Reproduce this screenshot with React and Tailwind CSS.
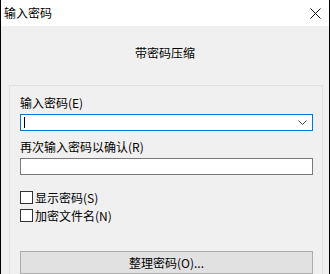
import { useState } from 'react';

const font = { fontFamily: '"Noto Sans CJK SC", "Liberation Sans", sans-serif' };

function Check({ label }) {
    return (
        <label className="flex h-[13px] items-center gap-[2px] text-[12px] leading-none text-black">
            <span className="h-[13px] w-[13px] border border-[#333] bg-white" />
            {label}
        </label>
    );
}

export default function App() {
    const [pwd, setPwd] = useState('');
    const [confirm, setConfirm] = useState('');

    return (
        <div
            className="flex h-[274px] w-[330px] flex-col overflow-hidden border-x border-black bg-[#f0f0f0]"
            style={font}
        >
            <div className="flex h-[26px] shrink-0 items-center justify-between bg-white pl-[3px] pr-[7px] text-[12px] text-black">
                <span>输入密码</span>
                <svg width="11" height="11" viewBox="0 0 11 11" className="mr-[1px]">
                    <path d="M0.5 0.5 L10.5 10.5 M10.5 0.5 L0.5 10.5" stroke="#111" strokeWidth="1" />
                </svg>
            </div>

            <div className="flex h-[36px] items-end justify-center text-[12px] leading-none text-black">
                带密码压缩
            </div>

            <div className="ml-[8px] mr-[6px] mt-[26px] flex flex-1 flex-col border-l border-r border-t border-[#e2e2e2] pl-[10px] pr-[9px]">
                <div className="mt-[11px] text-[12px] leading-none text-black">输入密码(E)</div>
                <div className="mt-[5px] flex h-[17px] items-center border border-[#0078d7] bg-white pl-[3px] pr-[5px]">
                    <span className="h-[11px] w-[1px] shrink-0 bg-black" />
                    <input
                        value={pwd}
                        onChange={(e) => setPwd(e.target.value)}
                        type="password"
                        className="h-full min-w-0 flex-1 bg-transparent text-[12px] outline-none"
                    />
                    <svg width="9" height="5" viewBox="0 0 9 5" className="shrink-0">
                        <path d="M0.5 0.5 L4.5 4.5 L8.5 0.5" fill="none" stroke="#444" strokeWidth="1" />
                    </svg>
                </div>

                <div className="mt-[10px] text-[12px] leading-none text-black">再次输入密码以确认(R)</div>
                <div className="mt-[5px] h-[17px] border border-[#7a7a7a] bg-white">
                    <input
                        value={confirm}
                        onChange={(e) => setConfirm(e.target.value)}
                        type="password"
                        className="h-full w-full bg-transparent px-[3px] text-[12px] outline-none"
                    />
                </div>

                <div className="mt-[16px] flex flex-col gap-[5px]">
                    <Check label="显示密码(S)" />
                    <Check label="加密文件名(N)" />
                </div>

                <button className="mt-[29px] h-[23px] w-full shrink-0 border border-[#adadad] bg-[#e1e1e1] text-[12px] text-black">
                    整理密码(O)...
                </button>
            </div>
        </div>
    );
}
